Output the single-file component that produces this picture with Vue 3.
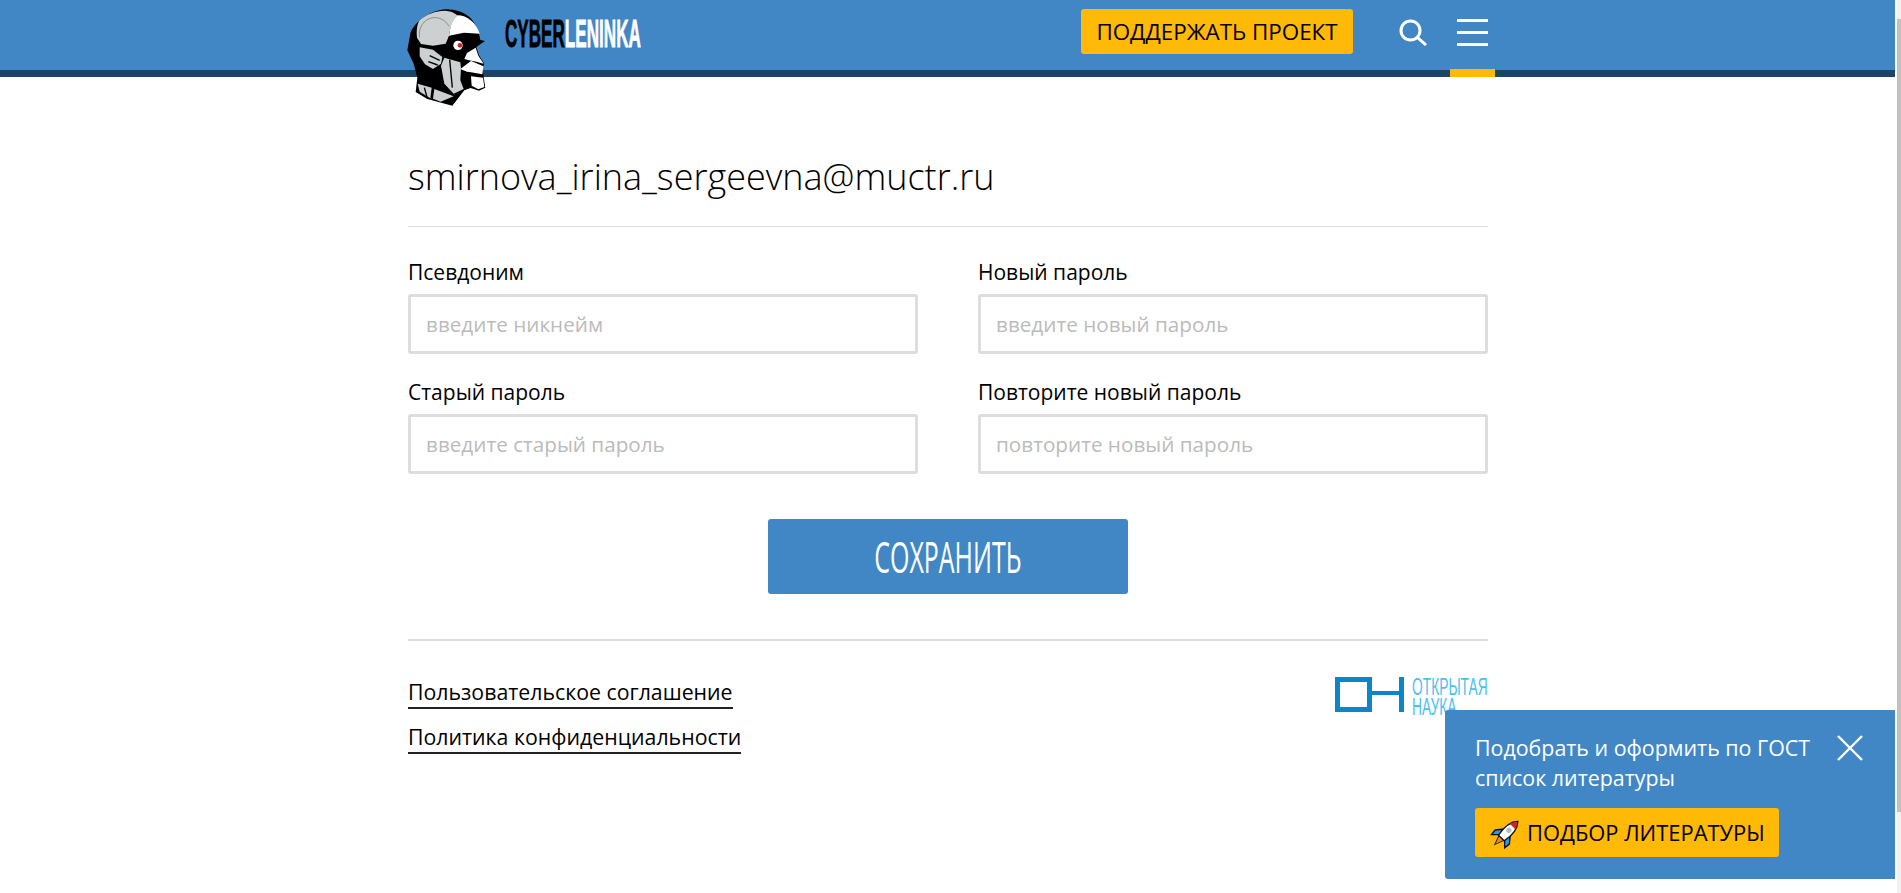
<script setup>
const fields = [
  { label: "Псевдоним", placeholder: "введите никнейм" },
  { label: "Новый пароль", placeholder: "введите новый пароль" },
  { label: "Старый пароль", placeholder: "введите старый пароль" },
  { label: "Повторите новый пароль", placeholder: "повторите новый пароль" },
];
</script>

<template>
  <div class="page">
    <header class="header">
      <div class="header-inner">
        <div class="brand"><span class="brand-text"><b>CYBER</b><i>LENINKA</i></span></div>
        <a class="support">ПОДДЕРЖАТЬ ПРОЕКТ</a>
        <svg class="search" viewBox="0 0 28 27" width="28" height="27">
          <circle cx="11.5" cy="11.5" r="9.5" fill="none" stroke="#fff" stroke-width="3" />
          <path d="M18.5 18.5 L27 26" stroke="#fff" stroke-width="3" fill="none" />
        </svg>
        <div class="burger"><span></span><span></span><span></span></div>
      </div>
    </header>

    <svg class="head" viewBox="45 20 255 300" width="85" height="100">
      <path fill="#000" d="M170 27 C205 27 240 40 256 68 C266 85 272 105 274 119 L288 122 L262 140 L270 165 L286 190 L280 204 L284 230 L289 262 L270 271 L245 263 L226 270 L190 316 L115 296 L80 275 L85 232 L74 190 L55 150 L64 100 C72 70 120 30 170 27Z" />
      <path fill="#fff" d="M205 45 C235 45 262 68 272 100 L225 97 L180 106 C184 82 186 60 205 45Z" />
      <path fill="#ccd0d0" d="M168 31 C182 32 196 36 205 45 C190 58 184 82 180 106 L170 130 L132 136 L96 131 L84 112 C82 90 84 72 92 60 C110 42 140 32 168 31Z" />
      <path fill="none" stroke="#555" stroke-width="1.6" d="M92 112 C86 84 104 56 132 52 C152 50 170 60 180 78" />
      <path fill="#fff" d="M260 142 L268 166 L284 190 L262 184 L240 180 L226 176 L234 158Z" />
      <path fill="#fff" d="M214 206 L246 182 L266 190 L283 198 L280 222 L246 216 L234 214Z" />
      <path fill="#fff" d="M246 228 L282 232 L286 260 L268 267 L248 256Z" />
      <path fill="#ccd0d0" d="M92 141 L132 148 L160 170 L156 190 L132 206 L108 192 L92 168Z" />
      <path fill="#ccd0d0" d="M166 172 L214 186 L216 204 L214 240 L224 266 L194 280 L166 250 L156 196Z" />
      <path fill="#ccd0d0" d="M86 250 L128 262 L124 294 L92 274Z" />
      <path fill="#ccd0d0" d="M136 266 L194 288 L155 304 L132 295Z" />
      <path fill="none" stroke="#000" stroke-width="4" d="M122 166 L152 180 M118 184 L146 194 M182 178 L190 262 M106 262 L114 290" />
      <circle cx="207" cy="135" r="14" fill="#fff" />
      <circle cx="213" cy="135" r="7" fill="#d3202a" />
    </svg>

    <main class="content">
      <h1 class="email">smirnova_irina_sergeevna@muctr.ru</h1>
      <form class="form" @submit.prevent>
        <div class="grid">
          <label v-for="field in fields" :key="field.label" class="field">
            <span class="field-label">{{ field.label }}</span>
            <input class="field-input" :placeholder="field.placeholder" />
          </label>
        </div>
        <button class="save" type="submit"><span>СОХРАНИТЬ</span></button>
      </form>
      <footer class="footer">
        <div class="links">
          <a>Пользовательское соглашение</a>
          <a>Политика конфиденциальности</a>
        </div>
        <div class="open-science">
          <svg viewBox="0 0 70 35" width="70" height="35">
            <path fill="none" stroke="#0b87c9" stroke-width="5" d="M2.5 2.5 H34.5 V32.5 H2.5Z" />
            <path fill="#0b87c9" d="M37 14 H64 V18 H37Z M64 0 H69 V35 H64Z" />
          </svg>
          <div class="open-science-text"><span>ОТКРЫТАЯ</span><span>НАУКА</span></div>
        </div>
      </footer>
    </main>

    <aside class="promo">
      <div class="promo-top">
        <p>Подобрать и оформить по ГОСТ<br />список литературы</p>
        <svg class="close" viewBox="0 0 26 26" width="26" height="26">
          <path d="M1 1 L25 25 M25 1 L1 25" stroke="#fff" stroke-width="2.4" fill="none" />
        </svg>
      </div>
      <a class="promo-btn">
        <svg viewBox="0 0 120 105" width="40" height="35">
          <g transform="rotate(45 66 52)">
            <path fill="#f08a24" stroke="#222" stroke-width="3" d="M55 74 H77 L66 104Z" />
            <path fill="#2b9be8" stroke="#111" stroke-width="4" d="M54 50 L36 72 L38 90 L54 74Z M78 50 L96 72 L94 90 L78 74Z" />
            <path fill="#fff" stroke="#111" stroke-width="4" d="M66 6 C80 20 84 46 78 76 H54 C48 46 52 20 66 6Z" />
            <path fill="#d3202a" d="M66 8 C72 14 76 21 78 28 H54 C56 21 60 14 66 8Z" />
            <circle cx="66" cy="44" r="8" fill="#bbb" />
          </g>
        </svg>
        ПОДБОР ЛИТЕРАТУРЫ
      </a>
    </aside>

    <div class="scrollbar"><div class="scrollbar-thumb"></div></div>
  </div>
</template>

<style>
html,
body {
  margin: 0;
  background: #fff;
  overflow: hidden;
}
</style>

<style scoped>
.page {
  position: relative;
  width: 1895px;
  height: 893px;
  font-family: "Open Sans", "Noto Sans", sans-serif;
  color: #000;
}

.header {
  height: 70px;
  background: #4187c5;
  border-bottom: 7px solid #1c4466;
}

.header-inner {
  width: 1080px;
  height: 70px;
  margin-left: 408px;
  display: flex;
  align-items: flex-start;
  position: relative;
}

.brand {
  margin-left: 97px;
  margin-top: 13px;
  width: 137px;
}

.brand-text {
  display: inline-block;
  font-family: "Liberation Sans", sans-serif;
  font-size: 38px;
  line-height: 42px;
  font-weight: 700;
  white-space: nowrap;
  -webkit-text-stroke: 0.8px currentColor;
  transform: scaleX(0.45);
  transform-origin: left center;
}

.brand-text b {
  color: #000;
  font-weight: 700;
}

.brand-text i {
  font-style: normal;
  color: #fff;
}

.support {
  margin-left: 439px;
  margin-top: 9px;
  width: 272px;
  height: 45px;
  line-height: 45px;
  text-align: center;
  background: #ffb906;
  border-radius: 3px;
  font-size: 22.4px;
  white-space: nowrap;
}

.search {
  margin-left: 46px;
  margin-top: 19px;
}

.burger {
  margin-left: 30px;
  margin-top: 19px;
  width: 31px;
  display: flex;
  flex-direction: column;
  gap: 9px;
}

.burger span {
  height: 3px;
  background: #fff;
}

.burger::after {
  content: "";
  position: absolute;
  left: 1042px;
  top: 69px;
  width: 45px;
  height: 8px;
  background: #ffb906;
}

.head {
  position: absolute;
  left: 404px;
  top: 7px;
}

.content {
  width: 1080px;
  margin-left: 408px;
}

.email {
  margin: 0;
  padding-top: 76px;
  height: 73px;
  font-size: 36px;
  line-height: 48px;
  font-weight: 300;
  border-bottom: 1px solid #ddd;
}

.form {
  margin: 0;
}

.grid {
  display: grid;
  grid-template-columns: 510px 510px;
  column-gap: 60px;
  row-gap: 23px;
  padding-top: 30px;
}

.field {
  display: block;
}

.field-label {
  display: block;
  font-size: 21px;
  line-height: 30px;
  height: 37px;
}

.field-input {
  display: block;
  box-sizing: border-box;
  width: 100%;
  height: 60px;
  border: 3px solid #ddd;
  border-radius: 3px;
  padding: 0 15px;
  font-family: inherit;
  font-size: 20.7px;
  outline: none;
}

.field-input::placeholder {
  color: #bbb;
  opacity: 1;
}

.save {
  display: block;
  width: 360px;
  height: 75px;
  margin: 45px auto 0;
  background: #4187c5;
  border: 0;
  border-radius: 3px;
  color: #fff;
  font-family: "Open Sans", sans-serif;
  font-weight: 400;
  font-size: 43px;
  overflow: hidden;
  padding: 0;
}

.save span {
  display: inline-block;
  transform: scaleX(0.58);
  white-space: nowrap;
}

.footer {
  margin-top: 45px;
  border-top: 2px solid #ddd;
  display: flex;
  justify-content: space-between;
  padding-top: 36px;
}

.links {
  display: flex;
  flex-direction: column;
  align-items: flex-start;
  gap: 13px;
}

.links a {
  font-size: 21.3px;
  line-height: 30px;
  border-bottom: 2px solid #222;
  white-space: nowrap;
}

.open-science {
  display: flex;
  gap: 7px;
}

.open-science-text {
  width: 76px;
  display: flex;
  flex-direction: column;
  color: #4cc0ee;
  font-family: "Liberation Sans", sans-serif;
  font-size: 23px;
  line-height: 20px;
}

.open-science-text span {
  display: inline-block;
  white-space: nowrap;
  transform: scaleX(0.6);
  transform-origin: left center;
}

.promo {
  position: absolute;
  left: 1445px;
  top: 710px;
  width: 450px;
  height: 169px;
  box-sizing: border-box;
  background: #4187c5;
  border-radius: 3px 0 0 3px;
  padding: 23px 30px;
  color: #fff;
}

.promo-top {
  display: flex;
  justify-content: space-between;
  align-items: flex-start;
}

.promo-top p {
  margin: 0;
  font-size: 21.4px;
  line-height: 30px;
  white-space: nowrap;
}

.close {
  margin-top: 2px;
  margin-right: 2px;
}

.promo-btn {
  display: inline-flex;
  align-items: center;
  gap: 2px;
  box-sizing: border-box;
  width: 304px;
  height: 49px;
  margin-top: 15px;
  padding-left: 10px;
  background: #ffb906;
  border-radius: 3px;
  color: #000;
  font-size: 21.9px;
  white-space: nowrap;
}

.scrollbar {
  position: fixed;
  left: 1897px;
  top: 0;
  width: 4px;
  height: 893px;
  background: #f1f1f1;
}

.scrollbar-thumb {
  margin-top: 19px;
  height: 793px;
  background: #c1c1c1;
}
</style>
